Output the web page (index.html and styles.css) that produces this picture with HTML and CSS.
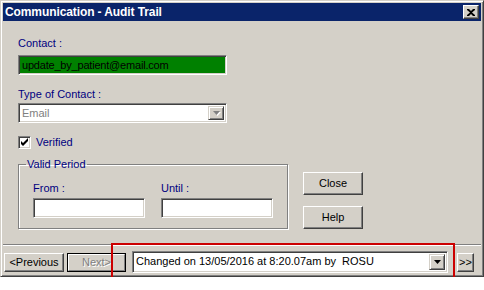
FILE: index.html
```html
<!DOCTYPE html>
<html lang="en">

<head>
    <meta charset="UTF-8">
    <title>Communication - Audit Trail</title>
    <link rel="stylesheet" href="styles.css">
</head>

<body>
    <div class="window">
        <div class="titlebar">
            <span class="title">Communication - Audit Trail</span>
            <span class="tb-close">
                <svg width="8" height="7" viewBox="0 0 8 7"><path d="M0 0h2l2 2 2-2h2v1L5 3.5 8 6v1H6L4 5 2 7H0V6l3-2.5L0 1z" fill="#000"/></svg>
            </span>
        </div>

        <div class="panel">
            <div class="label">Contact :</div>
            <div class="edit contact">update_by_patient@email.com</div>

            <div class="label type-label">Type of Contact :</div>
            <div class="combo disabled">
                <span class="combo-text">Email</span>
                <span class="drop">
                    <svg width="7" height="4" viewBox="0 0 7 4"><path d="M0 0h7L3.5 4z" fill="#808080"/></svg>
                </span>
            </div>

            <div class="check">
                <span class="box">
                    <svg width="9" height="9" viewBox="0 0 9 9"><path d="M1 3l2 2 5-5v3L3 8 1 6z" fill="#000"/></svg>
                </span>
                <span>Verified</span>
            </div>

            <div class="period-row">
                <fieldset class="group">
                    <legend>Valid Period</legend>
                    <div class="dates">
                        <div class="date">
                            <div class="label">From :</div>
                            <div class="edit"></div>
                        </div>
                        <div class="date">
                            <div class="label">Until :</div>
                            <div class="edit"></div>
                        </div>
                    </div>
                </fieldset>
                <div class="side-buttons">
                    <div class="btn">Close</div>
                    <div class="btn">Help</div>
                </div>
            </div>
        </div>

        <div class="footer">
            <div class="btn prev">&lt;Previous</div>
            <div class="btn next default"><span>Next&gt;</span></div>
            <div class="combo history">
                <span class="combo-text">Changed on 13/05/2016 at 8:20.07am by  ROSU</span>
                <span class="drop">
                    <svg width="7" height="4" viewBox="0 0 7 4"><path d="M0 0h7L3.5 4z" fill="#000"/></svg>
                </span>
            </div>
            <div class="btn last">&gt;&gt;</div>
        </div>
    </div>

    <div class="highlight"></div>
</body>

</html>
```

FILE: styles.css
```css
body {
    margin: 0;
    background-color: #fff;
    font-family: "Liberation Sans", Arial, sans-serif;
    font-size: 11px;
    line-height: 13px;
    position: relative;
}

.window {
    width: 484px;
    height: 277px;
    box-sizing: border-box;
    padding: 2px;
    background-color: #d4d0c8;
    border: 1px solid;
    border-color: #d4d0c8 #404040 #404040 #d4d0c8;
    box-shadow: inset 1px 1px 0 #fff, inset -1px -1px 0 #808080;
    display: flex;
    flex-direction: column;
}

.titlebar {
    height: 18px;
    background-color: #0a246a;
    display: flex;
    align-items: center;
    justify-content: space-between;
    padding: 0 2px;
}

.title {
    color: #fff;
    font-weight: bold;
    font-size: 12px;
    letter-spacing: -0.1px;
}

.tb-close {
    width: 16px;
    height: 14px;
    box-sizing: border-box;
    background-color: #d4d0c8;
    border: 1px solid;
    border-color: #fff #404040 #404040 #fff;
    box-shadow: inset -1px -1px 0 #808080;
    display: flex;
    align-items: center;
    justify-content: center;
}

.panel {
    height: 223px;
    padding-left: 15px;
    border-bottom: 1px solid #808080;
    box-shadow: 0 1px 0 #fff;
    display: flex;
    flex-direction: column;
    align-items: flex-start;
}

.label {
    color: #000080;
}

.panel > .label:first-child {
    margin-top: 16px;
}

/* sunken white edit box */
.edit {
    height: 20px;
    box-sizing: border-box;
    background-color: #fff;
    border: 1px solid;
    border-color: #808080 #fff #fff #808080;
    box-shadow: inset 1px 1px 0 #404040, inset -1px -1px 0 #d4d0c8;
    padding: 3px 0 0 3px;
    white-space: pre;
}

.contact {
    width: 209px;
    margin-top: 5px;
    background-color: #008000;
    color: #000;
    letter-spacing: -0.2px;
}

.type-label {
    margin-top: 13px;
}

.combo {
    height: 20px;
    box-sizing: border-box;
    background-color: #fff;
    border: 1px solid;
    border-color: #808080 #fff #fff #808080;
    box-shadow: inset 1px 1px 0 #404040, inset -1px -1px 0 #d4d0c8;
    padding: 2px;
    display: flex;
    align-items: stretch;
}

.combo-text {
    flex: 1;
    padding: 1px 0 0 1px;
    white-space: pre;
}

.drop {
    width: 16px;
    box-sizing: border-box;
    background-color: #d4d0c8;
    border: 1px solid;
    border-color: #d4d0c8 #404040 #404040 #d4d0c8;
    box-shadow: inset 1px 1px 0 #fff, inset -1px -1px 0 #808080;
    display: flex;
    align-items: center;
    justify-content: center;
}

.combo.disabled {
    width: 209px;
    margin-top: 2px;
}

.combo.disabled .combo-text {
    color: #808080;
}

.combo.disabled .drop svg {
    filter: drop-shadow(1px 1px 0 #fff);
}

.check {
    margin-top: 13px;
    display: flex;
    align-items: center;
    color: #000080;
}

.box {
    width: 13px;
    height: 13px;
    box-sizing: border-box;
    background-color: #fff;
    border: 1px solid;
    border-color: #808080 #fff #fff #808080;
    box-shadow: inset 1px 1px 0 #404040, inset -1px -1px 0 #d4d0c8;
    display: flex;
    align-items: center;
    justify-content: center;
    margin-right: 5px;
}

.period-row {
    display: flex;
    margin-top: 9px;
}

.group {
    width: 270px;
    box-sizing: border-box;
    margin: 0;
    padding: 11px 13px 10px 14px;
    border: 1px solid #808080;
    box-shadow: 1px 1px 0 #fff, inset 1px 1px 0 #fff;
}

.group legend {
    color: #000080;
    padding: 0 1px;
    margin-left: -7px;
}

.dates {
    display: flex;
    gap: 16px;
}

.date .edit {
    width: 112px;
    margin-top: 3px;
}

.side-buttons {
    margin-left: 15px;
    padding-top: 14px;
    display: flex;
    flex-direction: column;
    gap: 11px;
}

.btn {
    height: 23px;
    width: 60px;
    box-sizing: border-box;
    background-color: #d4d0c8;
    border: 1px solid;
    border-color: #fff #404040 #404040 #fff;
    box-shadow: inset -1px -1px 0 #808080;
    display: flex;
    align-items: center;
    justify-content: center;
    color: #000;
}

.footer {
    display: flex;
    align-items: center;
    padding: 6px 0 0 1px;
}

.footer .btn {
    height: 19px;
}

.next {
    margin-left: 3px;
    width: 59px;
}

.btn.default {
    border: 1px solid #000;
    box-shadow: none;
    padding: 0;
}

.btn.default span {
    width: 100%;
    height: 100%;
    box-sizing: border-box;
    border: 1px solid;
    border-color: #fff #808080 #808080 #fff;
    display: flex;
    align-items: center;
    justify-content: center;
    color: #808080;
    text-shadow: 1px 1px 0 #fff;
}

.history {
    width: 316px;
    height: 22px;
    margin-left: 6px;
    color: #000;
}

.footer .last {
    margin-left: 9px;
    width: 17px;
}

.highlight {
    position: absolute;
    left: 111px;
    top: 243px;
    width: 344px;
    height: 39px;
    box-sizing: border-box;
    border: 2px solid #cc0000;
}
```
